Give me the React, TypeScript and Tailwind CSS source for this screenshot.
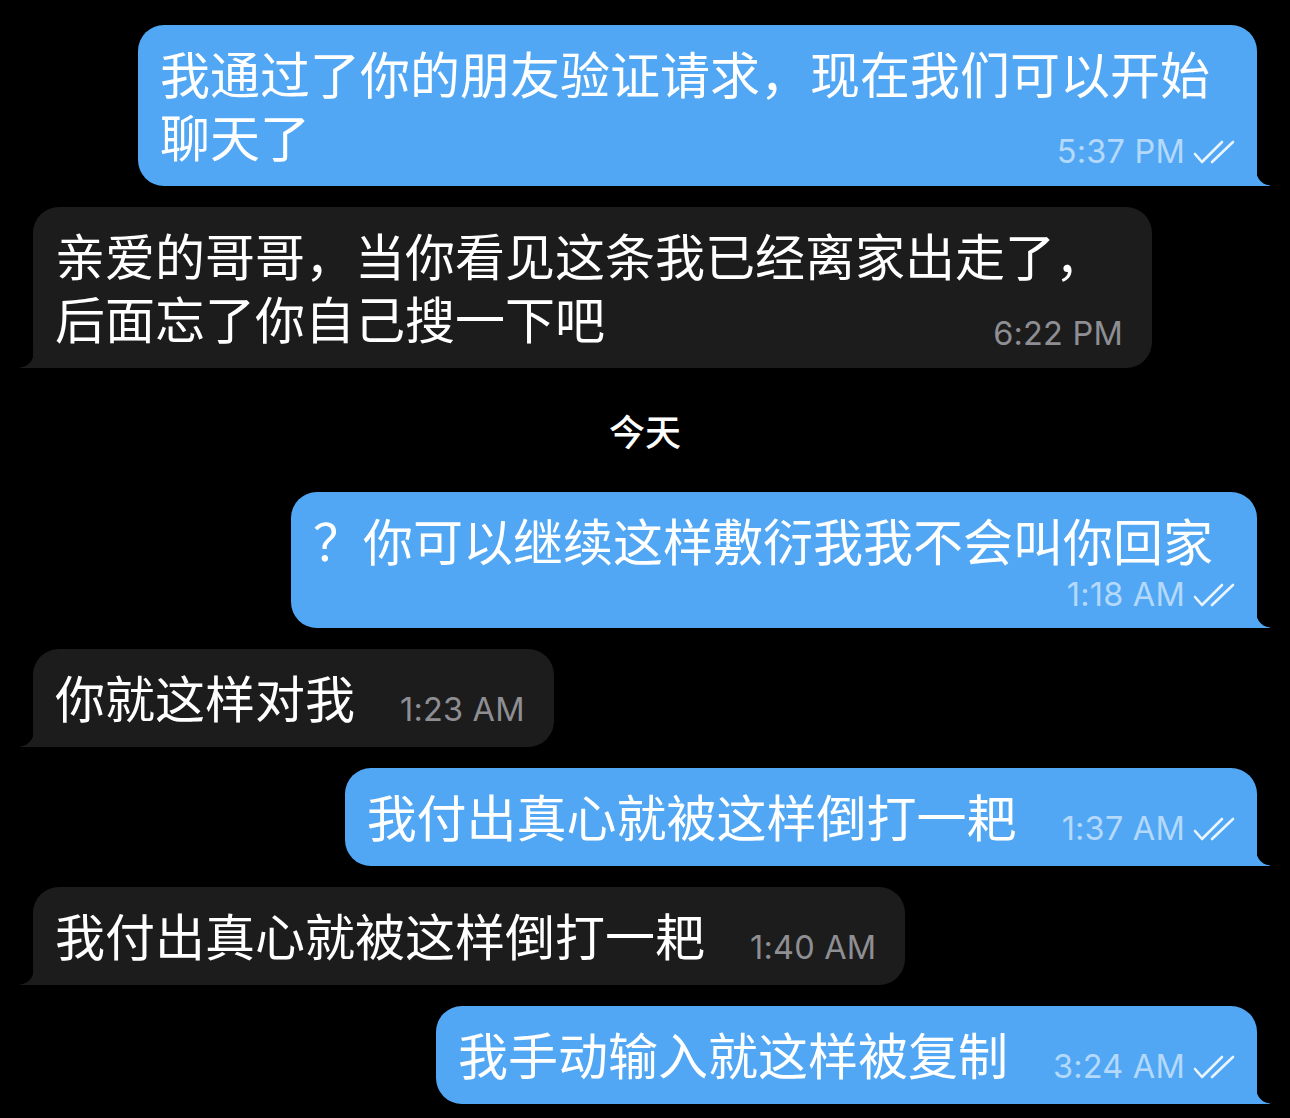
import clsx from 'clsx'

type Message = {
  side: 'in' | 'out'
  text: string
  time: string
  // where the time sits: beside the text, on its own row, or tucked under the last line
  meta: 'inline' | 'below' | 'overlap'
}

const messages: Message[] = [
  {
    side: 'out',
    text: '我通过了你的朋友验证请求，现在我们可以开始聊天了',
    time: '5:37 PM',
    meta: 'overlap',
  },
  {
    side: 'in',
    text: '亲爱的哥哥，当你看见这条我已经离家出走了，后面忘了你自己搜一下吧',
    time: '6:22 PM',
    meta: 'overlap',
  },
]

const today: Message[] = [
  { side: 'out', text: '？你可以继续这样敷衍我我不会叫你回家', time: '1:18 AM', meta: 'below' },
  { side: 'in', text: '你就这样对我', time: '1:23 AM', meta: 'inline' },
  { side: 'out', text: '我付出真心就被这样倒打一耙', time: '1:37 AM', meta: 'inline' },
  { side: 'in', text: '我付出真心就被这样倒打一耙', time: '1:40 AM', meta: 'inline' },
  { side: 'out', text: '我手动输入就这样被复制', time: '3:24 AM', meta: 'inline' },
]

const cjk = "font-['Noto_Sans_CJK_SC','Noto_Sans',sans-serif]"

function DoubleCheck() {
  return (
    <svg width="44" height="24" viewBox="0 0 44 24" fill="none" aria-hidden="true">
      <path d="M2 14 L9 22 L29 2" stroke="#eaf5ff" strokeWidth="2.6" strokeLinecap="round" strokeLinejoin="round" />
      <path d="M19 22 L40 2" stroke="#eaf5ff" strokeWidth="2.6" strokeLinecap="round" />
    </svg>
  )
}

function Tail({ out }: { out: boolean }) {
  // little flared corner under the bubble
  return (
    <svg
      width="16"
      height="24"
      viewBox="0 0 16 24"
      className={clsx('absolute bottom-0', out ? '-right-[14px]' : '-left-[14px] -scale-x-100')}
      aria-hidden="true"
    >
      <path d="M0 0 Q0 22 15 23.5 Q15.5 24 14 24 L0 24 Z" fill={out ? '#51a7f4' : '#1c1c1d'} />
    </svg>
  )
}

function Meta({ m }: { m: Message }) {
  const out = m.side === 'out'
  return (
    <div className="flex shrink-0 items-center gap-2">
      <span
        className={clsx(
          "font-['Inter','Liberation_Sans',sans-serif] text-[32.5px] leading-[40px] tracking-[0.2px]",
          out ? 'text-[#b4d9fb]' : 'text-[#8e8e93]'
        )}
      >
        {m.time}
      </span>
      {out && <DoubleCheck />}
    </div>
  )
}

function Bubble({ m }: { m: Message }) {
  const out = m.side === 'out'
  return (
    <div className={clsx('flex', out ? 'justify-end' : 'justify-start')}>
      <div
        className={clsx(
          'relative max-w-[1119px] pl-[22px] pt-4',
          out ? 'rounded-[26px] rounded-br-none bg-[#51a7f4] pr-5' : 'rounded-[26px] rounded-bl-none bg-[#1c1c1d] pr-[29px]',
          m.meta === 'inline' && 'flex items-end pb-[19px]',
          m.meta === 'below' && 'pb-[13px]',
          m.meta === 'overlap' && 'pb-[14px]'
        )}
      >
        <p className={clsx(cjk, 'text-[50px] leading-[63px] text-white', m.meta === 'below' && 'pr-6')}>{m.text}</p>
        {m.meta === 'inline' ? (
          <div className="-mb-[2px] ml-[45px]">
            <Meta m={m} />
          </div>
        ) : (
          <div className={clsx('flex justify-end', m.meta === 'overlap' ? '-mt-[35px]' : 'mt-1')}>
            <Meta m={m} />
          </div>
        )}
        <Tail out={out} />
      </div>
    </div>
  )
}

export default function App() {
  return (
    <div className="min-h-[1118px] w-[1290px] overflow-hidden bg-black px-[33px] pt-[25px]">
      <div className="flex flex-col gap-[21px]">
        {messages.map((m) => (
          <Bubble key={m.time} m={m} />
        ))}
      </div>

      <div className={clsx(cjk, 'my-10 text-center text-[36px] font-medium leading-[44px] text-white')}>今天</div>

      <div className="flex flex-col gap-[21px]">
        {today.map((m) => (
          <Bubble key={m.time} m={m} />
        ))}
      </div>
    </div>
  )
}
